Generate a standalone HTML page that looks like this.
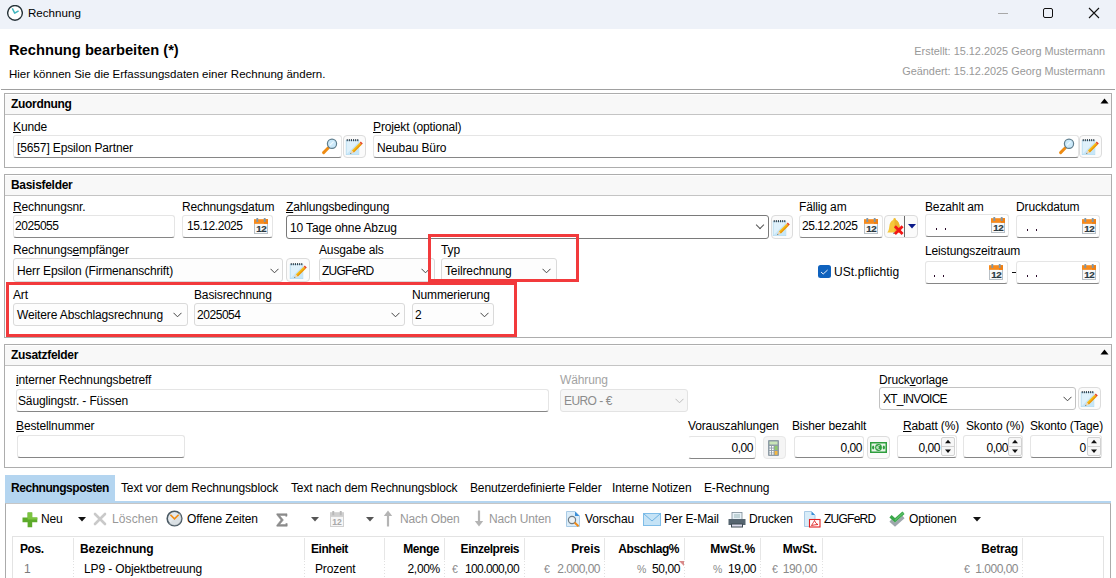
<!DOCTYPE html>
<html><head><meta charset="utf-8">
<style>
*{box-sizing:border-box;margin:0;padding:0}
html,body{width:1116px;height:578px;overflow:hidden;background:#fff;font-family:"Liberation Sans",sans-serif;font-size:12px;letter-spacing:-0.13px;color:#000}
.a{position:absolute}
.t{position:absolute;white-space:nowrap;line-height:14px;margin-top:1px}
.u{text-decoration:underline;text-underline-offset:1px}
.inp{position:absolute;background:#fff;border:1px solid #e5e5e5;border-bottom:1px solid #868686;border-radius:3px}
.cmb{position:absolute;background:#fdfdfd;border:1px solid #dadada;border-radius:3px}
.btn{position:absolute;background:#fbfbfb;border:1px solid #dcdcdc;border-radius:4px}
.grp{position:absolute;border:1px solid #adadad;background:#fff}
.gh{position:absolute;left:0;right:0;top:1px;height:20px;background:#f8f8f8;border-bottom:1px solid #c4c4c4}
.ght{position:absolute;left:6px;top:1.5px;font-weight:bold;font-size:12px;letter-spacing:-0.3px;line-height:14px}
.red{position:absolute;border:3px solid #f23a3c}
.chev{position:absolute;width:6px;height:6px;border-right:1px solid #555;border-bottom:1px solid #555;transform:rotate(45deg)}
.gr{color:#8a8a8a}
.n{letter-spacing:-0.45px}
</style></head><body>
<svg width="0" height="0" style="position:absolute">
<defs>
<symbol id="cal" viewBox="0 0 14 16">
<rect x="0.5" y="5" width="13" height="10.5" fill="#f8f9fa" stroke="#b9c0c6" stroke-width="1"/>
<rect x="0" y="1.2" width="14" height="4.6" fill="#f88a1b"/>
<rect x="10" y="1.2" width="4" height="4.6" fill="#ee7f14"/>
<rect x="2.4" y="0" width="1.8" height="4" fill="#7f97a8"/>
<rect x="9.8" y="0" width="1.8" height="4" fill="#7f97a8"/>
<text x="7.2" y="13.9" text-anchor="middle" font-family="Liberation Sans" font-weight="bold" font-size="9.8" letter-spacing="-0.5" fill="#2b3942" stroke="#2b3942" stroke-width="0.2">12</text>
</symbol>
<symbol id="edit" viewBox="0 0 22 22">
<rect x="3.2" y="5.4" width="12.6" height="14.2" fill="#dff1fb" stroke="#b1daf1" stroke-width="0.8"/>
<path d="M3.6 19.2 L15.4 7 L15.4 19.2Z" fill="#c6e6f8"/>
<g fill="#34434e"><rect x="3.7" y="4.1" width="1.1" height="2.1"/><rect x="5.8" y="4.1" width="1.1" height="2.1"/><rect x="7.9" y="4.1" width="1.1" height="2.1"/><rect x="10" y="4.1" width="1.1" height="2.1"/><rect x="12.1" y="4.1" width="1.1" height="2.1"/><rect x="14.2" y="4.1" width="1.1" height="2.1"/></g>
<path d="M8.8 15.6 L16.6 7.8 L18.6 9.8 L10.8 17.6Z" fill="#f9bd14"/>
<path d="M9.8 16.6 L17.6 8.8 L18.6 9.8 L10.8 17.6Z" fill="#e99810"/>
<path d="M16.6 7.8 L17.8 6.6 L19.8 8.6 L18.6 9.8Z" fill="#e5492b"/>
<path d="M8.8 15.6 L10.8 17.6 L7.2 19Z" fill="#f3d3a4"/>
<path d="M7.8 17.8 L8.4 18.4 L7.2 19Z" fill="#333"/>
</symbol>
<symbol id="mag" viewBox="0 0 18 18">
<path d="M2.6 15.6 L7.4 10.8" stroke="#ee8b12" stroke-width="3" stroke-linecap="round"/>
<circle cx="11" cy="6.8" r="4.6" fill="#cbe9fa" stroke="#5f7e8e" stroke-width="1.2"/>
<path d="M8.8 8.4 L12.6 4.6" stroke="#f2fbff" stroke-width="1.2"/>
</symbol>
</defs></svg>
<!-- title bar -->
<div class="a" style="left:0;top:0;width:1116px;height:29px;background:#eef2f9"></div>
<svg class="a" style="left:7px;top:5px" width="16" height="16" viewBox="0 0 16 16"><circle cx="8" cy="7.9" r="7.35" fill="#fff" stroke="#27343a" stroke-width="1.4"/><path d="M5.3 3.4 L7.7 8.2 L11.6 5.8" fill="none" stroke="#3fb5bd" stroke-width="1.5" stroke-linejoin="round"/></svg>
<div class="t" style="left:28px;top:5px;font-size:11.6px;letter-spacing:0">Rechnung</div>
<div class="a" style="left:998px;top:13px;width:10px;height:1px;background:#a8a8a8"></div>
<div class="a" style="left:1043px;top:8px;width:10px;height:10px;border:1.2px solid #111;border-radius:2px"></div>
<svg class="a" style="left:1088px;top:7px" width="12" height="12" viewBox="0 0 12 12"><path d="M1 1 L11 11 M11 1 L1 11" stroke="#111" stroke-width="1.1"/></svg>

<!-- header -->
<div class="t" style="left:9px;top:40px;font-size:14.7px;font-weight:bold;line-height:18px;letter-spacing:0">Rechnung bearbeiten (*)</div>
<div class="t" style="left:9px;top:66px;font-size:11.5px;letter-spacing:0">Hier können Sie die Erfassungsdaten einer Rechnung ändern.</div>
<div class="t gr" style="right:11px;top:43px;font-size:10.9px;letter-spacing:0;color:#999">Erstellt: 15.12.2025 Georg Mustermann</div>
<div class="t gr" style="right:11px;top:63px;font-size:10.9px;letter-spacing:0;color:#999">Geändert: 15.12.2025 Georg Mustermann</div>
<div class="a" style="left:1px;top:89px;width:1114px;height:1px;background:#a0a0a0"></div>

<!-- Zuordnung -->
<div class="grp" style="left:4px;top:93px;width:1108px;height:75px">
  <div class="gh"><div class="ght">Zuordnung</div></div>
</div>
<svg class="a" style="left:1100px;top:98px" width="9" height="6" viewBox="0 0 9 6"><path d="M0.5 5.5 L4.5 0.5 L8.5 5.5Z" fill="#000"/></svg>

<div class="t" style="left:13px;top:119px"><span class="u">K</span>unde</div>
<div class="inp" style="left:13px;top:135px;width:329px;height:23px"></div>
<div class="t" style="left:17px;top:139.5px">[5657] Epsilon Partner</div>
<svg class="a" style="left:321px;top:136.5px" width="18" height="18"><use href="#mag"/></svg>
<div class="btn" style="left:343px;top:135px;width:23px;height:23px"></div>
<svg class="a" style="left:343px;top:135px" width="22" height="22"><use href="#edit"/></svg>

<div class="t" style="left:373px;top:119px"><span class="u">P</span>rojekt (optional)</div>
<div class="inp" style="left:373px;top:135px;width:706px;height:23px"></div>
<div class="t" style="left:377px;top:139.5px">Neubau Büro</div>
<svg class="a" style="left:1058px;top:136.5px" width="18" height="18"><use href="#mag"/></svg>
<div class="btn" style="left:1079px;top:135px;width:23px;height:23px"></div>
<svg class="a" style="left:1079px;top:135px" width="22" height="22"><use href="#edit"/></svg>

<!-- Basisfelder -->
<div class="grp" style="left:4px;top:174px;width:1108px;height:164px">
  <div class="gh"><div class="ght">Basisfelder</div></div>
</div>


<!-- Basis row1 -->
<div class="t" style="left:13px;top:199px"><span class="u">R</span>echnungsnr.</div>
<div class="inp" style="left:13px;top:215px;width:162px;height:23px"></div>
<div class="t n" style="left:15px;top:218px">2025055</div>

<div class="t" style="left:182px;top:199px">Rechnungs<span class="u">d</span>atum</div>
<div class="inp" style="left:182px;top:215px;width:91px;height:23px"></div>
<div class="t n" style="left:187px;top:218px">15.12.2025</div>
<svg class="a" style="left:254px;top:218px" width="14" height="16"><use href="#cal"/></svg>

<div class="t" style="left:286px;top:199px"><span class="u">Z</span>ahlungsbedingung</div>
<div class="a" style="left:286px;top:215px;width:483px;height:24px;border:1px solid #7a7a7a;border-radius:3px;background:#fff"></div>
<div class="t" style="left:290px;top:220px">10 Tage ohne Abzug</div>
<div class="chev" style="left:757px;top:222px"></div>
<div class="btn" style="left:771px;top:215px;width:22px;height:24px"></div>
<svg class="a" style="left:770px;top:216px" width="22" height="22"><use href="#edit"/></svg>

<div class="t" style="left:799px;top:199px">Fällig am</div>
<div class="inp" style="left:799px;top:215px;width:84px;height:23px"></div>
<div class="t n" style="left:802px;top:218px">25.12.2025</div>
<svg class="a" style="left:864px;top:218px" width="14" height="16"><use href="#cal"/></svg>
<div class="btn" style="left:884px;top:215px;width:34px;height:23px"></div>
<svg class="a" style="left:886px;top:217px" width="18" height="18" viewBox="0 0 18 18"><path d="M1.2 15.6 C2.4 14.2 3 12.5 3.3 9.5 C3.6 6 5.2 3.6 7.2 3 C7.2 1.9 7.8 1.1 8.5 1.1 C9.2 1.1 9.8 1.9 9.8 3 C11.8 3.6 13.4 6 13.7 9.5 C14 12.5 14.6 14.2 15.8 15.6Z" fill="#f7c83a"/><path d="M8.5 1.1 C9.2 1.1 9.8 1.9 9.8 3 C11.8 3.6 13.4 6 13.7 9.5 C14 12.5 14.6 14.2 15.8 15.6 L8.5 15.6Z" fill="#ebb42c"/><rect x="7" y="15.6" width="3" height="1.4" fill="#8a9aa5"/><path d="M9.9 10.2 L15.6 15.9 M15.6 10.2 L9.9 15.9" stroke="#f31616" stroke-width="2.8" stroke-linecap="square"/></svg>
<div class="a" style="left:904px;top:216px;width:1px;height:21px;background:#6a6a6a"></div>
<svg class="a" style="left:908px;top:224px" width="8" height="5" viewBox="0 0 8 5"><path d="M0 0 L8 0 L4 4.5Z" fill="#0b1a8a"/></svg>

<div class="t" style="left:925px;top:199px">Bezahlt am</div>
<div class="inp" style="left:925px;top:214px;width:84px;height:23px"></div>
<div class="a" style="left:936px;top:228px;width:1.4px;height:2px;background:#2a0a2a"></div><div class="a" style="left:945px;top:228px;width:1.4px;height:2px;background:#2a0a2a"></div>
<svg class="a" style="left:991px;top:217px" width="14" height="16"><use href="#cal"/></svg>

<div class="t" style="left:1016px;top:199px">Druckdatum</div>
<div class="inp" style="left:1016px;top:215px;width:84px;height:23px"></div>
<div class="a" style="left:1027px;top:229px;width:1.4px;height:2px;background:#2a0a2a"></div><div class="a" style="left:1036px;top:229px;width:1.4px;height:2px;background:#2a0a2a"></div>
<svg class="a" style="left:1082px;top:218px" width="14" height="16"><use href="#cal"/></svg>

<!-- Basis row2 -->
<div class="t" style="left:13px;top:242px">Rechnungs<span class="u">e</span>mpfänger</div>
<div class="cmb" style="left:13px;top:258px;width:270px;height:24px"></div>
<div class="t" style="left:17px;top:263px">Herr Epsilon (Firmenanschrift)</div>
<svg class="a" style="left:270px;top:268px" width="9" height="6" viewBox="0 0 9 6"><path d="M0.5 0.8 L4.5 4.8 L8.5 0.8" fill="none" stroke="#444" stroke-width="1"/></svg>
<div class="btn" style="left:286px;top:258px;width:24px;height:24px"></div>
<svg class="a" style="left:287px;top:259px" width="22" height="22"><use href="#edit"/></svg>

<div class="t" style="left:319px;top:242px">Ausgabe als</div>
<div class="cmb" style="left:319px;top:258px;width:116px;height:24px"></div>
<div class="t" style="left:322px;top:263px;letter-spacing:-0.75px">ZUGFeRD</div>
<svg class="a" style="left:421px;top:268px" width="9" height="6" viewBox="0 0 9 6"><path d="M0.5 0.8 L4.5 4.8 L8.5 0.8" fill="none" stroke="#444" stroke-width="1"/></svg>

<div class="t" style="left:441px;top:242px">Typ</div>
<div class="cmb" style="left:441px;top:258px;width:116px;height:24px"></div>
<div class="t" style="left:445px;top:263px">Teilrechnung</div>
<svg class="a" style="left:542px;top:268px" width="9" height="6" viewBox="0 0 9 6"><path d="M0.5 0.8 L4.5 4.8 L8.5 0.8" fill="none" stroke="#444" stroke-width="1"/></svg>

<div class="a" style="left:818px;top:265px;width:13px;height:13px;background:#0f62be;border-radius:2.5px"></div>
<svg class="a" style="left:818px;top:265px" width="13" height="13" viewBox="0 0 13 13"><path d="M3 7 L5.2 9 L9.6 5" fill="none" stroke="#e8f0fa" stroke-width="1"/></svg>
<div class="t" style="left:834px;top:264px;letter-spacing:0.1px">USt.pflichtig</div>

<div class="t" style="left:925px;top:243px">Leistungszeitraum</div>
<div class="inp" style="left:925px;top:261px;width:83px;height:23px"></div>
<div class="a" style="left:934px;top:275px;width:1.4px;height:2px;background:#2a0a2a"></div><div class="a" style="left:943px;top:275px;width:1.4px;height:2px;background:#2a0a2a"></div>
<svg class="a" style="left:989px;top:264px" width="14" height="16"><use href="#cal"/></svg>
<div class="a" style="left:1012px;top:272px;width:3.5px;height:1.2px;background:#111"></div>
<div class="inp" style="left:1016px;top:261px;width:84px;height:23px"></div>
<div class="a" style="left:1027px;top:275px;width:1.4px;height:2px;background:#2a0a2a"></div><div class="a" style="left:1036px;top:275px;width:1.4px;height:2px;background:#2a0a2a"></div>
<svg class="a" style="left:1082px;top:264px" width="14" height="16"><use href="#cal"/></svg>

<!-- Basis row3 -->
<div class="t" style="left:13px;top:287px">Art</div>
<div class="cmb" style="left:13px;top:303px;width:175px;height:23px"></div>
<div class="t" style="left:17px;top:307px">Weitere Abschlagsrechnung</div>
<svg class="a" style="left:173px;top:312px" width="9" height="6" viewBox="0 0 9 6"><path d="M0.5 0.8 L4.5 4.8 L8.5 0.8" fill="none" stroke="#444" stroke-width="1"/></svg>

<div class="t" style="left:194px;top:287px">Basisrechnung</div>
<div class="cmb" style="left:194px;top:303px;width:211px;height:23px"></div>
<div class="t n" style="left:197px;top:307px">2025054</div>
<svg class="a" style="left:391px;top:312px" width="9" height="6" viewBox="0 0 9 6"><path d="M0.5 0.8 L4.5 4.8 L8.5 0.8" fill="none" stroke="#444" stroke-width="1"/></svg>

<div class="t" style="left:412px;top:287px">Nummerierung</div>
<div class="cmb" style="left:412px;top:303px;width:82px;height:23px"></div>
<div class="t" style="left:415px;top:307px">2</div>
<svg class="a" style="left:480px;top:312px" width="9" height="6" viewBox="0 0 9 6"><path d="M0.5 0.8 L4.5 4.8 L8.5 0.8" fill="none" stroke="#444" stroke-width="1"/></svg>

<div class="red" style="left:428px;top:234px;width:151px;height:48px"></div>
<div class="red" style="left:6px;top:282px;width:511px;height:55px"></div>

<!-- Zusatzfelder -->
<div class="grp" style="left:4px;top:344px;width:1108px;height:124px">
  <div class="gh"><div class="ght">Zusatzfelder</div></div>
</div>
<svg class="a" style="left:1100px;top:349px" width="9" height="6" viewBox="0 0 9 6"><path d="M0.5 5.5 L4.5 0.5 L8.5 5.5Z" fill="#000"/></svg>


<!-- Zusatz row1 -->
<div class="t" style="left:16px;top:372px"><span class="u">i</span>nterner Rechnungsbetreff</div>
<div class="inp" style="left:16px;top:389px;width:533px;height:23px"></div>
<div class="t" style="left:18px;top:393px">Säuglingstr. - Füssen</div>

<div class="t" style="left:560px;top:372px;color:#a3a3a3">Währung</div>
<div class="a" style="left:560px;top:389px;width:128px;height:23px;border:1px solid #e3e3e3;border-radius:3px;background:#f7f7f7"></div>
<div class="t" style="left:564px;top:393px;color:#8c8c8c;letter-spacing:-0.6px;word-spacing:0.3px">EURO - €</div>
<svg class="a" style="left:675px;top:398px" width="9" height="6" viewBox="0 0 9 6"><path d="M0.5 0.8 L4.5 4.8 L8.5 0.8" fill="none" stroke="#bbb" stroke-width="1"/></svg>

<div class="t" style="left:879px;top:372px">Druck<span class="u">v</span>orlage</div>
<div class="a" style="left:879px;top:387px;width:197px;height:23px;border:1px solid #c2c2c2;border-radius:3px;background:#fff"></div>
<div class="t" style="left:883px;top:391px;letter-spacing:-0.75px">XT_INVOICE</div>
<svg class="a" style="left:1063px;top:396px" width="9" height="6" viewBox="0 0 9 6"><path d="M0.5 0.8 L4.5 4.8 L8.5 0.8" fill="none" stroke="#444" stroke-width="1"/></svg>
<div class="btn" style="left:1078px;top:387px;width:23px;height:23px"></div>
<svg class="a" style="left:1078px;top:387px" width="22" height="22"><use href="#edit"/></svg>

<!-- Zusatz row2 -->
<div class="t" style="left:16px;top:418px"><span class="u">B</span>estellnummer</div>
<div class="inp" style="left:17px;top:435px;width:168px;height:23px"></div>

<div class="t" style="left:688px;top:418px">Vorauszahlungen</div>
<div class="inp" style="left:688px;top:436px;width:68px;height:23px;border-left-color:#fff"></div>
<div class="t n" style="left:700px;top:440px;width:53px;text-align:right">0,00</div>
<div class="btn" style="left:763px;top:436px;width:23px;height:23px;background:#f5f5f5;border-color:#e8e8e8"></div>
<svg class="a" style="left:768px;top:440px" width="11" height="16" viewBox="0 0 11 16"><rect x="0" y="0" width="11" height="16" rx="1" fill="#8e9ca6"/><rect x="1.5" y="1.5" width="8" height="3" fill="#c9e6b8"/><g fill="#fff"><rect x="1.5" y="6" width="1.6" height="1.6"/><rect x="4" y="6" width="1.6" height="1.6"/><rect x="1.5" y="8.5" width="1.6" height="1.6"/><rect x="4" y="8.5" width="1.6" height="1.6"/><rect x="1.5" y="11" width="1.6" height="1.6"/><rect x="4" y="11" width="1.6" height="1.6"/><rect x="1.5" y="13.2" width="1.6" height="1.4"/><rect x="4" y="13.2" width="1.6" height="1.4"/></g><rect x="6.7" y="6" width="2.8" height="4" fill="#8fca6a"/><rect x="6.7" y="11" width="2.8" height="3.8" fill="#f5b840"/></svg>

<div class="t" style="left:792px;top:418px">Bisher bezahlt</div>
<div class="inp" style="left:794px;top:436px;width:70px;height:22px"></div>
<div class="t n" style="left:805px;top:440px;width:57px;text-align:right">0,00</div>
<div class="btn" style="left:867px;top:436px;width:23px;height:23px"></div>
<svg class="a" style="left:870px;top:442px" width="17" height="11" viewBox="0 0 17 11"><rect x="0" y="0" width="17" height="11" fill="#2e9e3e"/><rect x="1.5" y="1.5" width="14" height="8" fill="#e8f4e8"/><circle cx="8.5" cy="5.5" r="3.4" fill="#2e9e3e"/><path d="M9.8 3.6 C8 3 7 4.4 7 5.5 C7 6.6 8 8 9.8 7.4 M6.4 5 L9 5 M6.4 6 L9 6" stroke="#e8f4e8" stroke-width="0.8" fill="none"/><ellipse cx="3.2" cy="5.5" rx="1.1" ry="2" fill="#2e9e3e"/><ellipse cx="13.8" cy="5.5" rx="1.1" ry="2" fill="#2e9e3e"/></svg>

<div class="t" style="left:903px;top:418px"><span class="u">R</span>abatt (%)</div>
<div class="inp" style="left:897px;top:435px;width:60px;height:23px"></div>
<div class="t n" style="left:900px;top:440px;width:40px;text-align:right">0,00</div>
<div class="a" style="left:941px;top:437px;width:14px;height:19px;border:1px solid #d2d2d2;border-radius:2px;background:#f7f7f7"></div>
<div class="a" style="left:941px;top:446px;width:14px;height:1px;background:#d2d2d2"></div>
<svg class="a" style="left:944px;top:439px" width="8" height="15" viewBox="0 0 8 15"><path d="M1 4.3 L4 0.8 L7 4.3Z M1 10.5 L7 10.5 L4 14Z" fill="#111"/></svg>

<div class="t" style="left:966px;top:418px">Skonto (%)</div>
<div class="inp" style="left:963px;top:435px;width:60px;height:23px"></div>
<div class="t n" style="left:968px;top:440px;width:40px;text-align:right">0,00</div>
<div class="a" style="left:1008px;top:437px;width:14px;height:19px;border:1px solid #d2d2d2;border-radius:2px;background:#f7f7f7"></div>
<div class="a" style="left:1008px;top:446px;width:14px;height:1px;background:#d2d2d2"></div>
<svg class="a" style="left:1011px;top:439px" width="8" height="15" viewBox="0 0 8 15"><path d="M1 4.3 L4 0.8 L7 4.3Z M1 10.5 L7 10.5 L4 14Z" fill="#111"/></svg>

<div class="t" style="left:1030px;top:418px">Skonto (Tage)</div>
<div class="inp" style="left:1030px;top:435px;width:72px;height:23px"></div>
<div class="t" style="left:1050px;top:440px;width:36px;text-align:right">0</div>
<div class="a" style="left:1087px;top:437px;width:14px;height:19px;border:1px solid #d2d2d2;border-radius:2px;background:#f7f7f7"></div>
<div class="a" style="left:1087px;top:446px;width:14px;height:1px;background:#d2d2d2"></div>
<svg class="a" style="left:1090px;top:439px" width="8" height="15" viewBox="0 0 8 15"><path d="M1 4.3 L4 0.8 L7 4.3Z M1 10.5 L7 10.5 L4 14Z" fill="#111"/></svg>

<!-- tabs -->
<div class="a" style="left:5px;top:475px;width:110px;height:28px;background:#b4d5f0"></div>
<div class="a" style="left:5px;top:501px;width:1106px;height:2px;background:#b4d5f0"></div>
<div class="a" style="left:5px;top:503px;width:1106px;height:75px;border:1px solid #ababab;border-top:1px solid #c6c6c6;border-bottom:none"></div>
<div class="t" style="left:11px;top:480px;font-weight:bold;font-size:12px;letter-spacing:-0.45px">Rechnungsposten</div>
<div class="t" style="left:121px;top:480px">Text vor dem Rechnungsblock</div>
<div class="t" style="left:291px;top:480px">Text nach dem Rechnungsblock</div>
<div class="t" style="left:470px;top:480px">Benutzerdefinierte Felder</div>
<div class="t" style="left:612px;top:480px">Interne Notizen</div>
<div class="t" style="left:704px;top:480px">E-Rechnung</div>

<!-- toolbar -->
<svg class="a" style="left:22px;top:512px" width="16" height="16" viewBox="0 0 16 16"><path d="M5.6 0.5 H10.2 V5.6 H15.3 V10.2 H10.2 V15.3 H5.6 V10.2 H0.5 V5.6 H5.6Z" fill="#5caa2a"/><path d="M5.6 0.5 H10.2 V5.6 H15.3 V7.6 H5.6Z" fill="#7cc440"/></svg>
<div class="t" style="left:41px;top:511px">Neu</div>
<svg class="a" style="left:78px;top:517px" width="8" height="5" viewBox="0 0 8 5"><path d="M0 0 H8 L4 4.5Z" fill="#111"/></svg>
<svg class="a" style="left:93px;top:512px" width="14" height="14" viewBox="0 0 14 14"><path d="M2 2 L12 12 M12 2 L2 12" stroke="#c9c9c9" stroke-width="2.6" stroke-linecap="round"/></svg>
<div class="t" style="left:112px;top:511px;color:#989898;letter-spacing:0.1px">Löschen</div>
<svg class="a" style="left:166px;top:510px" width="17" height="17" viewBox="0 0 17 17"><circle cx="8.5" cy="8.5" r="7.3" fill="#e4e9ed" stroke="#4b5a64" stroke-width="1.6"/><path d="M3 14 L14 3 L15.5 8.5 A7 7 0 0 1 8.5 15.5Z" fill="#d3dade" opacity="0.6"/><path d="M4.4 4.8 L8.5 8.9 L12.6 4.8" fill="none" stroke="#f28c12" stroke-width="1.6"/></svg>
<div class="t" style="left:187px;top:511px">Offene Zeiten</div>
<svg class="a" style="left:276px;top:513px" width="12" height="14" viewBox="0 0 12 14"><path d="M0.8 0.8 H11 V3.2 H9.6 V2.4 H3.6 L7.4 7 L3.6 11.6 H9.8 V10.6 H11.2 V13.2 H0.8 V12.2 L5 7 L0.8 1.8Z" fill="#8c8c8c" stroke="#8c8c8c" stroke-width="0.6"/></svg>
<svg class="a" style="left:311px;top:517px" width="8" height="5" viewBox="0 0 8 5"><path d="M0 0 H8 L4 4.5Z" fill="#555"/></svg>
<svg class="a" style="left:330px;top:511px" width="14" height="16" viewBox="0 0 14 16"><rect x="0.5" y="5" width="13" height="10.5" fill="#f7f7f7" stroke="#d0d0d0"/><rect x="0" y="1.2" width="14" height="4.6" fill="#cfcfcf"/><rect x="2.3" y="0" width="1.9" height="4.2" fill="#b8b8b8"/><rect x="9.8" y="0" width="1.9" height="4.2" fill="#b8b8b8"/><text x="7" y="14.3" text-anchor="middle" font-family="Liberation Sans" font-weight="bold" font-size="8.6" fill="#a8a8a8">12</text></svg>
<svg class="a" style="left:366px;top:517px" width="8" height="5" viewBox="0 0 8 5"><path d="M0 0 H8 L4 4.5Z" fill="#555"/></svg>
<svg class="a" style="left:383px;top:510px" width="10" height="17" viewBox="0 0 10 17"><path d="M5 4 V16.5" stroke="#b4b4b4" stroke-width="2.2"/><path d="M0.8 6 L5 0.5 L9.2 6Z" fill="#b4b4b4"/></svg>
<div class="t" style="left:400px;top:511px;color:#989898">Nach Oben</div>
<svg class="a" style="left:474px;top:510px" width="10" height="17" viewBox="0 0 10 17"><path d="M5 0.5 V13" stroke="#b4b4b4" stroke-width="2.2"/><path d="M0.8 11 L5 16.5 L9.2 11Z" fill="#b4b4b4"/></svg>
<div class="t" style="left:489px;top:511px;color:#989898">Nach Unten</div>
<svg class="a" style="left:566px;top:511px" width="15" height="16" viewBox="0 0 15 16"><path d="M0.5 0.5 H9 L13.5 5 V15.5 H0.5Z" fill="#dcedf9" stroke="#a9cbe6"/><path d="M9 0.5 V5 H13.5Z" fill="#3a8fd8"/><circle cx="6" cy="9" r="3.6" fill="#eef3f6" stroke="#6f7c85" stroke-width="1.2"/><path d="M8.6 11.6 L12.5 15.3" stroke="#ef8a1a" stroke-width="2"/></svg>
<div class="t" style="left:585px;top:511px">Vorschau</div>
<svg class="a" style="left:643px;top:513px" width="18" height="13" viewBox="0 0 18 13"><rect x="0.5" y="0.5" width="17" height="12" fill="#c5e3f6" stroke="#7fbde8"/><path d="M0.8 0.8 L9 8 L17.2 0.8" fill="none" stroke="#6fb2e2" stroke-width="1"/></svg>
<div class="t" style="left:664px;top:511px">Per E-Mail</div>
<svg class="a" style="left:728px;top:512px" width="18" height="16" viewBox="0 0 18 16"><rect x="4" y="0.5" width="10" height="8" fill="#e8f1f7" stroke="#7d8c96" stroke-width="0.8"/><path d="M6 3 H12 M6 5 H12" stroke="#8aa" stroke-width="0.8"/><path d="M0.5 7 H17.5 V13 H0.5Z" fill="#55646f"/><rect x="3" y="11.5" width="12" height="4" fill="#3e4a53"/><rect x="4" y="12.5" width="10" height="2" fill="#dde"/></svg>
<div class="t" style="left:749px;top:511px">Drucken</div>
<svg class="a" style="left:804px;top:511px" width="17" height="17" viewBox="0 0 17 17"><path d="M0.5 0.5 H7.5 L11 4 V15.5 H0.5Z" fill="#d8ecf8" stroke="#a9cbe6"/><path d="M7.5 0.5 V4 H11Z" fill="#3a8fd8"/><rect x="5.5" y="8.5" width="10.5" height="7.5" fill="#fff" stroke="#e02020" stroke-width="1.1"/><path d="M7.5 14.5 C9 12 10 10.5 10.5 9.5 C11.5 12 12.5 13 14 13.5 C12 13.6 9.5 14 7.5 14.5Z" fill="none" stroke="#e02020" stroke-width="0.9"/></svg>
<div class="t" style="left:824px;top:511px;letter-spacing:-0.75px">ZUGFeRD</div>
<svg class="a" style="left:889px;top:511px" width="16" height="16" viewBox="0 0 16 16"><path d="M1.5 9.5 L6 13.6 L14.5 6" fill="none" stroke="#9ea7ad" stroke-width="3.2" stroke-linejoin="miter"/><path d="M1.5 5.2 L6 9.3 L14.5 1.7" fill="none" stroke="#3aa64a" stroke-width="3.2" stroke-linejoin="miter"/><path d="M6 9.3 L14.5 1.7" stroke="#5cc068" stroke-width="1.2"/></svg>
<div class="t" style="left:909px;top:511px">Optionen</div>
<svg class="a" style="left:973px;top:517px" width="8" height="5" viewBox="0 0 8 5"><path d="M0 0 H8 L4 4.5Z" fill="#111"/></svg>

<!-- grid -->
<div class="a" style="left:12px;top:536px;width:1092px;height:50px;border:1px solid #e3e3e3;border-bottom:none"></div>
<div class="a" style="left:73px;top:538px;width:1px;height:22px;background:#e6e6e6"></div>
<div class="a" style="left:73px;top:561px;width:1px;height:17px;background:repeating-linear-gradient(#e0e0e0 0 1px,transparent 1px 3px)"></div>
<div class="a" style="left:304px;top:538px;width:1px;height:22px;background:#e6e6e6"></div>
<div class="a" style="left:304px;top:561px;width:1px;height:17px;background:repeating-linear-gradient(#e0e0e0 0 1px,transparent 1px 3px)"></div>
<div class="a" style="left:384px;top:538px;width:1px;height:22px;background:#e6e6e6"></div>
<div class="a" style="left:384px;top:561px;width:1px;height:17px;background:repeating-linear-gradient(#e0e0e0 0 1px,transparent 1px 3px)"></div>
<div class="a" style="left:444px;top:538px;width:1px;height:22px;background:#e6e6e6"></div>
<div class="a" style="left:444px;top:561px;width:1px;height:17px;background:repeating-linear-gradient(#e0e0e0 0 1px,transparent 1px 3px)"></div>
<div class="a" style="left:524px;top:538px;width:1px;height:22px;background:#e6e6e6"></div>
<div class="a" style="left:524px;top:561px;width:1px;height:17px;background:repeating-linear-gradient(#e0e0e0 0 1px,transparent 1px 3px)"></div>
<div class="a" style="left:604px;top:538px;width:1px;height:22px;background:#e6e6e6"></div>
<div class="a" style="left:604px;top:561px;width:1px;height:17px;background:repeating-linear-gradient(#e0e0e0 0 1px,transparent 1px 3px)"></div>
<div class="a" style="left:684px;top:538px;width:1px;height:22px;background:#e6e6e6"></div>
<div class="a" style="left:684px;top:561px;width:1px;height:17px;background:repeating-linear-gradient(#e0e0e0 0 1px,transparent 1px 3px)"></div>
<div class="a" style="left:760px;top:538px;width:1px;height:22px;background:#e6e6e6"></div>
<div class="a" style="left:760px;top:561px;width:1px;height:17px;background:repeating-linear-gradient(#e0e0e0 0 1px,transparent 1px 3px)"></div>
<div class="a" style="left:822px;top:538px;width:1px;height:22px;background:#e6e6e6"></div>
<div class="a" style="left:822px;top:561px;width:1px;height:17px;background:repeating-linear-gradient(#e0e0e0 0 1px,transparent 1px 3px)"></div>
<div class="a" style="left:1022px;top:538px;width:1px;height:22px;background:#e6e6e6"></div>
<div class="a" style="left:1022px;top:561px;width:1px;height:17px;background:repeating-linear-gradient(#e0e0e0 0 1px,transparent 1px 3px)"></div>
<div class="t" style="left:20px;top:541px;font-weight:bold;font-size:12px;letter-spacing:-0.45px">Pos.</div>
<div class="t" style="left:80px;top:541px;font-weight:bold;font-size:12px;letter-spacing:-0.1px">Bezeichnung</div>
<div class="t" style="left:311px;top:541px;font-weight:bold;font-size:12px;letter-spacing:-0.45px">Einheit</div>
<div class="t" style="left:340px;top:541px;width:99px;text-align:right;font-weight:bold;font-size:12px;letter-spacing:-0.45px">Menge</div>
<div class="t" style="left:420px;top:541px;width:99px;text-align:right;font-weight:bold;font-size:12px;letter-spacing:-0.45px">Einzelpreis</div>
<div class="t" style="left:500px;top:541px;width:100px;text-align:right;font-weight:bold;font-size:12px;letter-spacing:-0.1px">Preis</div>
<div class="t" style="left:580px;top:541px;width:99px;text-align:right;font-weight:bold;font-size:12px;letter-spacing:-0.45px">Abschlag%</div>
<div class="t" style="left:656px;top:541px;width:99px;text-align:right;font-weight:bold;font-size:12px;letter-spacing:-0.1px">MwSt.%</div>
<div class="t" style="left:718px;top:541px;width:99px;text-align:right;font-weight:bold;font-size:12px;letter-spacing:-0.1px">MwSt.</div>
<div class="t" style="left:918px;top:541px;width:100px;text-align:right;font-weight:bold;font-size:12px;letter-spacing:-0.2px">Betrag</div>

<div class="t" style="left:24px;top:561px;color:#7a7a7a">1</div>
<div class="t" style="left:84px;top:561px">LP9 - Objektbetreuung</div>
<div class="t" style="left:315px;top:561px">Prozent</div>
<div class="t" style="left:340px;top:561px;width:100px;text-align:right;letter-spacing:-0.3px">2,00%</div>
<div class="t" style="left:452px;top:560.5px;font-size:10.5px;color:#8a8a8a">€</div>
<div class="t" style="left:440px;top:561px;width:79px;text-align:right;letter-spacing:-0.6px">100.000,00</div>
<div class="t" style="left:544px;top:560.5px;font-size:10.5px;color:#8a8a8a">€</div>
<div class="t" style="left:520px;top:561px;width:80px;text-align:right;letter-spacing:-0.5px;color:#8a8a8a">2.000,00</div>
<div class="t" style="left:637px;top:560.5px;font-size:10.5px;color:#8a8a8a">%</div>
<div class="t" style="left:600px;top:561px;width:80px;text-align:right;letter-spacing:-0.4px">50,00</div>
<svg class="a" style="left:679px;top:561px" width="5" height="5" viewBox="0 0 5 5"><path d="M0 0 H5 V5Z" fill="#d88a8a"/></svg>
<div class="t" style="left:713px;top:560.5px;font-size:10.5px;color:#8a8a8a">%</div>
<div class="t" style="left:676px;top:561px;width:80px;text-align:right;letter-spacing:-0.4px">19,00</div>
<div class="t" style="left:772px;top:560.5px;font-size:10.5px;color:#8a8a8a">€</div>
<div class="t" style="left:737px;top:561px;width:80px;text-align:right;letter-spacing:-0.4px;color:#8a8a8a">190,00</div>
<div class="t" style="left:964px;top:560.5px;font-size:10.5px;color:#8a8a8a">€</div>
<div class="t" style="left:938px;top:561px;width:80px;text-align:right;letter-spacing:-0.5px;color:#8a8a8a">1.000,00</div>
</body></html>
